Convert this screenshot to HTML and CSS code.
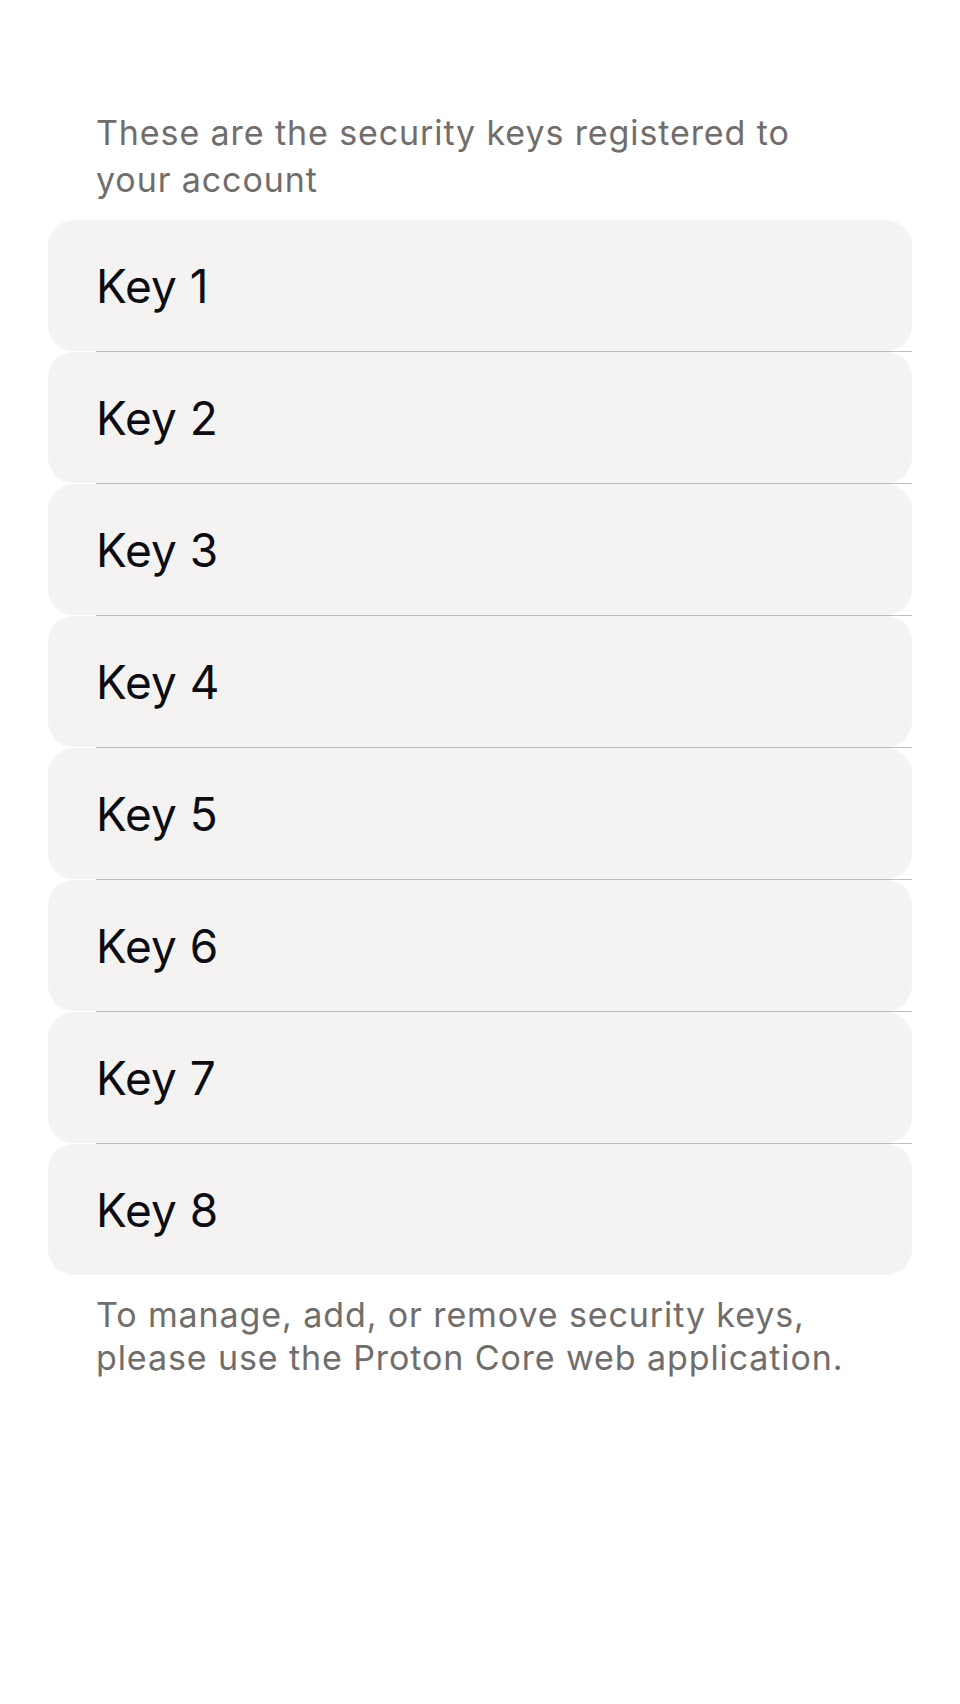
FILE: index.html
```html
<!DOCTYPE html>
<html lang="en">
<head>
<meta charset="utf-8">
<title>Security keys</title>
<link rel="stylesheet" href="styles.css">
</head>
<body>
<main class="screen">
  <p class="intro">These are the security keys registered to your account</p>
  <ul class="key-list">
    <li class="key-item"><span class="key-name">Key 1</span></li>
    <li class="key-item"><span class="key-name">Key 2</span></li>
    <li class="key-item"><span class="key-name">Key 3</span></li>
    <li class="key-item"><span class="key-name">Key 4</span></li>
    <li class="key-item"><span class="key-name">Key 5</span></li>
    <li class="key-item"><span class="key-name">Key 6</span></li>
    <li class="key-item"><span class="key-name">Key 7</span></li>
    <li class="key-item"><span class="key-name">Key 8</span></li>
  </ul>
  <p class="footnote">To manage, add, or remove security keys, please use the Proton Core web application.</p>
</main>
</body>
</html>
```

FILE: styles.css
```css
* { box-sizing: border-box; }
html, body {
  margin: 0;
  padding: 0;
  background: #ffffff;
}
body {
  font-family: Inter, "Noto Sans", "Liberation Sans", sans-serif;
  width: 960px;
  height: 1704px;
}
.screen {
  padding: 109px 48px 0 48px;
}
.intro {
  margin: 0 0 17px 0;
  padding: 0 96px 0 48px;
  font-size: 34px;
  line-height: 47px;
  letter-spacing: 0.9px;
  color: #706d6b;
}
.key-list {
  list-style: none;
  margin: 0;
  padding: 0;
  display: flex;
  flex-direction: column;
}
.key-item {
  height: 131px;
  background: #f4f3f2;
  border-radius: 26px;
  display: flex;
  align-items: center;
  padding-left: 48px;
  position: relative;
}
.key-item + .key-item {
  margin-top: 1px;
}
.key-item + .key-item::before {
  content: "";
  position: absolute;
  left: 48px;
  right: 0;
  top: -1px;
  height: 1px;
  background: #bebebe;
}
.key-name {
  font-size: 46px;
  letter-spacing: 0;
  color: #0c0c14;
  line-height: 1;
}
.footnote {
  margin: 19px 0 0 0;
  padding: 0 48px;
  font-size: 34px;
  line-height: 42.5px;
  letter-spacing: 0.9px;
  color: #706d6b;
}
```
